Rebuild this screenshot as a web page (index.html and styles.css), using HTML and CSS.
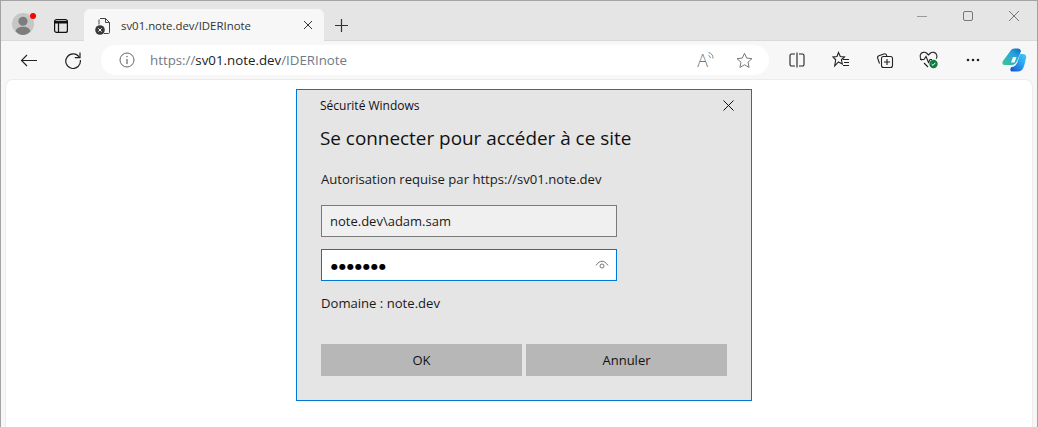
FILE: index.html
```html
<!DOCTYPE html>
<html lang="fr">
<head>
<meta charset="utf-8">
<title>Sécurité Windows</title>
<link rel="stylesheet" href="styles.css">
</head>
<body>
<div class="window">
  <header class="tabstrip">
    <div class="profile">
      <svg width="22" height="22" viewBox="0 0 24 24"><circle cx="12" cy="12" r="12" fill="#c6c6c6"/><circle cx="12" cy="9" r="5" fill="#7d7d7d"/><path d="M4 20c1-4 4-5 8-5s7 1 8 5c-2 2.500-5 4-8 4s-6-1.500-8-4z" fill="#7d7d7d"/></svg>
      <span class="dot"></span>
    </div>
    <button class="tb-btn tabs-btn" aria-label="Onglets">
      <svg width="16" height="16" viewBox="0 0 16 16" fill="none" stroke="#111" stroke-width="1.200"><rect x="1.600" y="1.600" width="12.800" height="12.800" rx="2"/><path d="M5.500 5v9.400" /><path d="M2 3.500h12V5H2z" fill="#111"/></svg>
    </button>
    <div class="tab">
      <svg class="favicon" width="16" height="18" viewBox="0 0 16 18" fill="none"><path d="M5 1.500h5.500L14.500 5.500v10a1 1 0 0 1-1 1H9" stroke="#444" stroke-width="1"/><path d="M10.500 1.500v4h4" stroke="#444" stroke-width="1"/><path d="M4 2.500v5" stroke="#444"/><circle cx="5" cy="13" r="4.800" fill="#3a3a3a"/><path d="M3.400 11.400l3.200 3.200m0-3.200l-3.200 3.200" stroke="#fff" stroke-width="1"/></svg>
      <span class="tab-title">sv01.note.dev/IDERInote</span>
      <svg class="tab-close" width="10" height="10" viewBox="0 0 10 10" stroke="#333" stroke-width="1"><path d="M1 1l8 8M9 1l-8 8"/></svg>
    </div>
    <svg class="plus" width="15" height="15" viewBox="0 0 15 15" stroke="#333" stroke-width="1.200"><path d="M7.500 1v13M1 7.500h13"/></svg>
    <div class="win-controls">
      <svg width="12" height="12" viewBox="0 0 12 12" stroke="#999" stroke-width="1"><path d="M1 6.500h10"/></svg>
      <svg width="12" height="12" viewBox="0 0 12 12" fill="none" stroke="#777" stroke-width="1"><rect x="1.500" y="1.500" width="9" height="9" rx="1.500"/></svg>
      <svg width="12" height="12" viewBox="0 0 12 12" stroke="#777" stroke-width="1"><path d="M1 1l10 10M11 1L1 11"/></svg>
    </div>
  </header>

  <nav class="toolbar">
    <svg class="nav-back" width="18" height="13" viewBox="0 0 18 13" fill="none" stroke="#222" stroke-width="1.100"><path d="M17 6.500H1.500M7 1L1.500 6.500 7 12"/></svg>
    <svg class="nav-reload" width="18" height="18" viewBox="0 0 18 18" fill="none" stroke="#222" stroke-width="1.200"><path d="M15.400 6.500A7.300 7.300 0 1 0 16.300 9"/><path d="M16 1.500v5.200h-5.200"/></svg>
    <div class="address">
      <svg class="info" width="16" height="16" viewBox="0 0 16 16" fill="none" stroke="#666" stroke-width="1"><circle cx="8" cy="8" r="7"/><path d="M8 7v5M8 4v1.300" stroke-width="1.200"/></svg>
      <span class="url"><span class="dim">https://</span>sv01.note.dev<span class="dim">/IDERInote</span></span>
      <span class="read-aloud">A<svg width="6" height="10" viewBox="0 0 6 10" fill="none" stroke="#777" stroke-width=".9"><path d="M.5 4.500a3 3 0 0 1 2 2.500M.5 1.500A6 6 0 0 1 5 7.500"/></svg></span>
      <svg class="star" width="17" height="17" viewBox="0 0 17 17" fill="none" stroke="#777" stroke-width="1"><path d="M8.500 1.300l2.200 4.800 5.200.6-3.900 3.500 1.100 5.200-4.600-2.600-4.600 2.600 1.100-5.200L1.100 6.700l5.200-.6z"/></svg>
    </div>
    <div class="tools">
      <svg width="16" height="16" viewBox="0 0 16 16" fill="none" stroke="#222" stroke-width="1.100"><path d="M6 2H2.500A1.500 1.500 0 0 0 1 3.500v9A1.500 1.500 0 0 0 2.500 14H6M10 2h3.500A1.500 1.500 0 0 1 15 3.500v9a1.500 1.500 0 0 1-1.500 1.500H10M8 .5v15"/></svg>
      <svg width="18" height="18" viewBox="0 0 18 18" fill="none" stroke="#222" stroke-width="1.100"><path d="M6.500 1.500l1.800 4 4.200.5-3.100 2.800.9 4.200-3.800-2.100-3.800 4 1-6.100L1 6l4-.5zM11 8.500h6M12 11.500h5M11 14.500h6"/></svg>
      <svg class="collections" width="18" height="18" viewBox="0 0 18 18" fill="none" stroke="#222" stroke-width="1.100"><rect x="5.500" y="5.500" width="11" height="11" rx="2"/><path d="M11 8v6M8 11h6M3.500 12.500L1.700 7.200a2 2 0 0 1 1.200-2.500l5-1.800a2 2 0 0 1 2.600 1.200l.4 1.400"/></svg>
      <svg class="health" width="20" height="18" viewBox="0 0 20 18" fill="none"><path d="M3 9.500C1.300 7.500.8 6 1.200 4.300 2 1 6 .5 8 2.500l1.500 1.500L11 2.500c2-2 6-1.500 6.800 1.800.3 1.200.2 2.300-.5 3.500" stroke="#222" stroke-width="1.100"/><path d="M1 8.500h4l2-3 2.500 6 1.500-3h2M5 12l4 4" stroke="#222" stroke-width="1.100"/><circle cx="14.500" cy="13" r="4.200" fill="#107c41"/><path d="M12.700 13.100l1.300 1.300 2.300-2.600" stroke="#fff" stroke-width="1"/></svg>
      <svg width="14" height="4" viewBox="0 0 14 4" fill="#222"><circle cx="2" cy="2" r="1.300"/><circle cx="7" cy="2" r="1.300"/><circle cx="12" cy="2" r="1.300"/></svg>
      <svg class="copilot" width="25" height="24" viewBox="0 0 25 24">
        <defs>
          <linearGradient id="cpa" x1="0" y1="1" x2="1" y2="0"><stop offset="0" stop-color="#37c98f"/><stop offset=".6" stop-color="#2aa5dd"/><stop offset="1" stop-color="#0f6cbd"/></linearGradient>
          <linearGradient id="cpb" x1="0" y1="1" x2="1" y2="0"><stop offset="0" stop-color="#1c4bd6"/><stop offset=".6" stop-color="#28a9ee"/><stop offset="1" stop-color="#4cc8f5"/></linearGradient>
        </defs>
        <path d="M8 3.500C9 1.500 10.500.5 12.500.5h3.500c1.500 0 2.500 1 3 2.500l-3.500 9c-1.500 3.500-3 5-6 5H2.500C.800 17 0 15.500.600 13.500z" fill="url(#cpa)"/>
        <path d="M18 6h3c2 0 3.500 1.500 3.200 3.500l-2 8c-.8 3-2.800 6-6 6H10.500c-1.500 0-2.500-1.200-2.200-2.500l1-2c3 0 5-2 6.200-5z" fill="url(#cpb)"/>
        <path d="M11 9h3.500l-2 5.500H9z" fill="#fff"/>
      </svg>
    </div>
  </nav>

  <main class="content">
    <form class="dialog">
      <div class="dialog-head">
        <span class="dialog-app">Sécurité Windows</span>
        <svg class="dialog-close" width="11" height="11" viewBox="0 0 11 11" stroke="#111" stroke-width="1"><path d="M.5.500l10 10M10.500.500l-10 10"/></svg>
      </div>
      <h1 class="dialog-title">Se connecter pour accéder à ce site</h1>
      <p class="dialog-text">Autorisation requise par https://sv01.note.dev</p>
      <div class="field field-user">note.dev\adam.sam</div>
      <div class="field field-pass">
        <span class="dots">●●●●●●●</span>
        <svg width="14" height="10" viewBox="0 0 14 10" fill="none" stroke="#666" stroke-width=".9"><path d="M1 5.500C3 2.500 5 1.200 7 1.200s4 1.300 6 4.300"/><circle cx="7" cy="6" r="2"/></svg>
      </div>
      <p class="dialog-domain">Domaine : note.dev</p>
      <div class="actions">
        <button type="button" class="btn">OK</button>
        <button type="button" class="btn">Annuler</button>
      </div>
    </form>
  </main>
</div>
</body>
</html>
```
FILE: styles.css
```css
* { box-sizing: border-box; }
html, body { margin: 0; height: 100%; }
body { overflow: hidden; font-family: "Open Sans", "Noto Sans", sans-serif; background: #f7f7f7; color: #1a1a1a; }
.window { width: 1038px; height: 427px; display: flex; flex-direction: column; border: 1px solid #a3a3a3; border-bottom: 0; overflow: hidden; }

.tabstrip { height: 40px; flex: none; display: flex; align-items: flex-end; background: #e5e5e5; border-bottom: 1px solid #d9d9d9; padding-left: 11px; }
.profile { position: relative; width: 22px; height: 22px; align-self: center; margin-top: 6px; display: flex; }
.dot { position: absolute; top: 0; right: -2px; width: 6px; height: 6px; border-radius: 50%; background: #f00; }
.tb-btn { border: 0; background: none; padding: 0; display: flex; }
.tabs-btn { margin-left: 19px; align-self: center; margin-top: 10px; }
.tab { width: 240px; height: 32px; margin-left: 15px; margin-bottom: -1px; background: #f7f7f7; border-radius: 6px 6px 0 0; display: flex; align-items: center; padding: 0 11px 0 11px; }
.favicon { flex: none; margin-top: 1px; }
.tab-title { font-size: 11.400px; margin-left: 10px; color: #333; flex: 1; white-space: nowrap; }
.tab-close { flex: none; }
.plus { align-self: center; margin: 9px 0 0 10px; flex: none; }
.win-controls { margin-left: auto; align-self: flex-start; margin-top: 9px; display: flex; gap: 34px; padding-right: 17px; }

.toolbar { height: 38px; flex: none; display: flex; align-items: center; background: #f7f7f7; padding-left: 19px; }
.nav-back { flex: none; }
.nav-reload { flex: none; margin-left: 26px; }
.address { width: 668px; height: 30px; margin-left: 19px; border-radius: 15px; background: #fff; display: flex; align-items: center; padding: 0 16px 0 18px; }
.info { flex: none; }
.url { margin-left: 15px; font-size: 13.300px; color: #222; flex: 1; white-space: nowrap; }
.dim { color: #6f7b85; }
.read-aloud { font-size: 18px; font-weight: 300; color: #777; display: flex; align-items: flex-start; line-height: 18px; margin-right: 22px; }
.star { flex: none; }
.tools { display: flex; align-items: center; margin-left: 20px; gap: 27px; }
.collections { margin-left: -1px; }
.health { margin-left: -2px; }
.copilot { margin-left: -5px; }

.content { flex: 1; margin: 0 4px; background: #fff; border-radius: 8px 8px 0 0; border: 1px solid #ececec; border-bottom: 0; display: flex; justify-content: center; align-items: flex-start; padding: 9px 0 0 10px; }
.dialog { width: 456px; height: 312px; background: #e5e5e5; border: 1px solid #0078d7; padding: 7px 24px 0 23px; display: flex; flex-direction: column; }
.dialog-head { display: flex; justify-content: space-between; align-items: center; height: 16px; }
.dialog-close { margin-right: -7px; }
.dialog-app { font-size: 12px; color: #111; }
.dialog-title { margin: 12px 0 0; font-size: 18.900px; line-height: 26px; font-weight: 400; color: #111; white-space: nowrap; }
.dialog-text { margin: 19px 0 0 1px; font-size: 13.100px; line-height: 18px; color: #1a1a1a; white-space: nowrap; }
.field { margin: 17px 0 0 1px; width: 296px; height: 32px; flex: none; font-size: 13px; display: flex; align-items: center; padding: 0 8px; }
.field-user { background: #f0f0f0; border: 1px solid #7a7a7a; color: #1a1a1a; }
.field-pass { margin-top: 12px; background: #fff; border: 1px solid #0078d7; justify-content: space-between; padding-right: 7px; }
.dots { font-size: 8px; letter-spacing: 1px; color: #000; font-family: "DejaVu Sans", sans-serif; margin: 2px 0 0 1px; }
.dialog-domain { margin: 13px 0 0 1px; font-size: 13.100px; line-height: 18px; color: #1a1a1a; }
.actions { margin: 32px 0 0 1px; display: flex; gap: 4px; }
.btn { width: 201px; height: 32px; background: #b7b7b7; border: 0; font: inherit; font-size: 13px; color: #111; padding: 0; }
```
